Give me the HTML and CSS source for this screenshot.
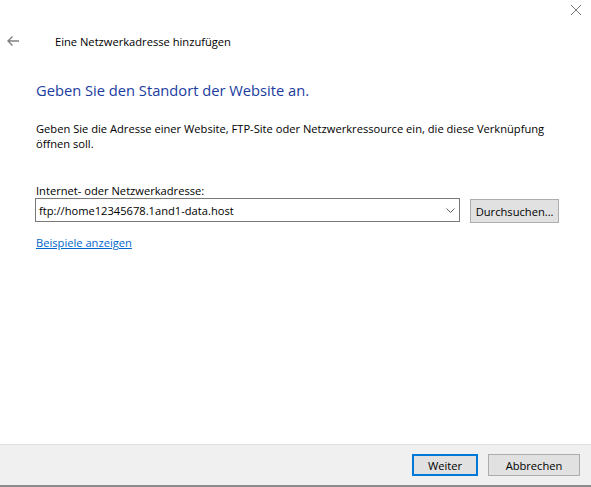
FILE: index.html
```html
<!DOCTYPE html>
<html lang="de">
<head>
<meta charset="utf-8">
<title>Eine Netzwerkadresse hinzufügen</title>
<link rel="stylesheet" href="styles.css">
</head>
<body>
<div class="window">
  <div class="topbar">
    <svg class="close" width="12" height="12" viewBox="0 0 12 12"><path d="M1 1 L11 11 M11 1 L1 11" stroke="#7a7a7a" stroke-width="1" fill="none"/></svg>
  </div>
  <div class="header">
    <svg class="back" width="14" height="12" viewBox="0 0 14 12"><path d="M13 6 H2 M6.5 1.5 L2 6 L6.5 10.5" stroke="#808080" stroke-width="1.4" fill="none"/></svg>
    <span class="title">Eine Netzwerkadresse hinzufügen</span>
  </div>
  <main class="content">
    <h1 class="heading">Geben Sie den Standort der Website an.</h1>
    <p class="desc">Geben Sie die Adresse einer Website, FTP-Site oder Netzwerkressource ein, die diese Verknüpfung öffnen soll.</p>
    <div class="label">Internet- oder Netzwerkadresse:</div>
    <div class="row">
      <div class="combo">
        <span class="value">ftp://home12345678.1and1-data.host</span>
        <svg class="chev" width="9" height="5" viewBox="0 0 9 5"><path d="M0.5 0.5 L4.5 4.5 L8.5 0.5" stroke="#606060" stroke-width="1" fill="none"/></svg>
      </div>
      <button class="btn browse">Durchsuchen...</button>
    </div>
    <a class="link" href="#">Beispiele anzeigen</a>
  </main>
  <footer class="footer">
    <button class="btn primary">Weiter</button>
    <button class="btn cancel">Abbrechen</button>
  </footer>
</div>
</body>
</html>
```
FILE: styles.css
```css
html, body {
  margin: 0;
  padding: 0;
  background: #ffffff;
}
body {
  font-family: "Open Sans", "Noto Sans", sans-serif;
  font-size: 11.15px;
  color: #000;
}
.window {
  width: 591px;
  height: 487px;
  display: flex;
  flex-direction: column;
  overflow: hidden;
}
.topbar {
  height: 24px;
  display: flex;
  justify-content: flex-end;
  align-items: flex-start;
}
.close {
  margin-top: 4px;
  margin-right: 9px;
}
.header {
  height: 34px;
  display: flex;
  align-items: center;
}
.back {
  margin-left: 6px;
  margin-right: 35px;
}
.title {
  font-size: 11.15px;
  line-height: 15px;
}
.content {
  flex: 1;
  padding-left: 36px;
  padding-right: 32px;
}
.heading {
  margin: 22px 0 0 0;
  font-size: 14.7px;
  font-weight: normal;
  line-height: 20px;
  color: #1a3c9e;
}
.desc {
  margin: 21px 0 0 0;
  line-height: 15px;
  max-width: 520px;
}
.label {
  margin-top: 32px;
  line-height: 15px;
}
.row {
  margin-top: 0;
  display: flex;
  align-items: flex-start;
  margin-left: -1px;
}
.combo {
  width: 422px;
  height: 22px;
  border: 1px solid #7a7a7a;
  display: flex;
  align-items: center;
  justify-content: space-between;
  padding-left: 3px;
  padding-right: 4px;
  box-sizing: content-box;
}
.combo .value {
  line-height: 15px;
}
.btn {
  font-family: inherit;
  font-size: 11.15px;
  color: #000;
  background: #e1e1e1;
  border: 1px solid #adadad;
  padding: 0;
  margin: 0;
  box-sizing: border-box;
}
.browse {
  margin-left: 10px;
  margin-top: 1px;
  width: 90px;
  height: 24px;
}
.link {
  display: inline-block;
  margin-top: 12px;
  line-height: 15px;
  color: #0066cc;
  text-decoration: underline;
}
.footer {
  flex: none;
  height: 43px;
  background: #f0f0f0;
  border-top: 1px solid #dfdfdf;
  border-bottom: 2px solid #8c8c8c;
  display: flex;
  justify-content: flex-end;
  align-items: flex-start;
  padding-right: 11px;
  gap: 10px;
  box-sizing: border-box;
}
.footer .btn {
  margin-top: 9px;
  height: 22px;
}
.primary {
  width: 66px;
  border: 2px solid #0078d7;
}
.cancel {
  width: 92px;
}
```
